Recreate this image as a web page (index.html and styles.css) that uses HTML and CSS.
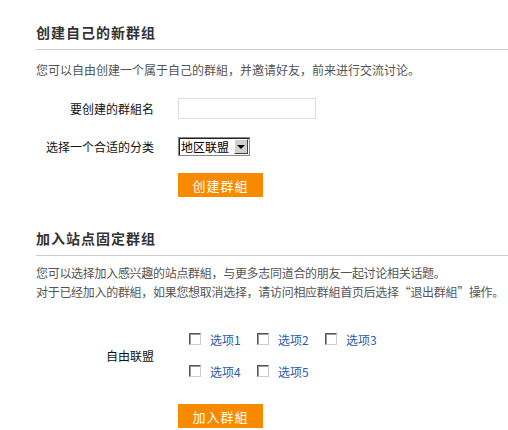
FILE: index.html
```html
<!DOCTYPE html>
<html>
<head>
    <meta charset="UTF-8">
    <meta name="viewport" content="width=device-width, initial-scale=1.0">
    <title>群组</title>
    <link rel="stylesheet" href="styles.css">
</head>
<body>
    <div class="section create">
        <h2>创建自己的新群组</h2>
        <p class="desc">您可以自由创建一个属于自己的群組，并邀请好友，前来进行交流讨论。</p>
        <form class="form">
            <label class="label" for="name">要创建的群組名</label>
            <div class="field"><input id="name" type="text"></div>
            <label class="label" for="cat">选择一个合适的分类</label>
            <div class="field">
                <span class="select-wrap">
                    <select id="cat">
                        <option selected>地区联盟</option>
                        <option>兴趣爱好</option>
                    </select>
                </span>
            </div>
            <div></div>
            <div class="field"><button type="button" class="btn">创建群組</button></div>
        </form>
    </div>
    <div class="section join">
        <h2>加入站点固定群组</h2>
        <p class="desc">您可以选择加入感兴趣的站点群組，与更多志同道合的朋友一起讨论相关话题。<br>对于已经加入的群組，如果您想取消选择，请访问相应群組首页后选择“退出群組”操作。</p>
        <form class="form">
            <div class="label group">自由联盟</div>
            <div class="field options">
                <label class="opt"><input type="checkbox"><a href="#">选项1</a></label>
                <label class="opt"><input type="checkbox"><a href="#">选项2</a></label>
                <label class="opt"><input type="checkbox"><a href="#">选项3</a></label>
                <label class="opt"><input type="checkbox"><a href="#">选项4</a></label>
                <label class="opt"><input type="checkbox"><a href="#">选项5</a></label>
            </div>
            <div></div>
            <div class="field"><button type="button" class="btn">加入群組</button></div>
        </form>
    </div>
</body>
</html>
```

FILE: styles.css
```css
body {
    margin: 0;
    padding: 0 0 0 36px;
    font-family: "Noto Sans CJK SC", "Liberation Sans", sans-serif;
    font-size: 12px;
    color: #333;
    background: #fff;
    overflow: hidden;
}
h2 {
    margin: 0;
    padding-bottom: 7px;
    font-size: 14px;
    line-height: 20px;
    letter-spacing: 1px;
    border-bottom: 1px solid #ccc;
    color: #333;
}
.create h2 {
    padding-top: 22px;
}
.join h2 {
    padding-top: 31px;
}
.desc {
    margin: 0;
    line-height: 19px;
    color: #555;
    white-space: nowrap;
}
.create .desc {
    margin-top: 10px;
}
.join .desc {
    margin-top: 7px;
    letter-spacing: -0.3px;
}
.form {
    display: grid;
    grid-template-columns: 118px 1fr;
    column-gap: 24px;
    align-items: center;
}
.create .form {
    margin-top: 19px;
    row-gap: 18px;
}
.create .form .btn {
    margin-top: -1px;
}
.join .form {
    margin-top: 28px;
    row-gap: 23px;
}
.label {
    text-align: right;
    color: #111;
}
input[type="text"] {
    box-sizing: border-box;
    width: 138px;
    height: 21px;
    margin: 0;
    border: 1px solid #ddd;
    display: block;
}
.select-wrap {
    position: relative;
    display: inline-block;
    vertical-align: top;
}
.select-wrap select {
    appearance: none;
    box-sizing: border-box;
    width: 72px;
    height: 19px;
    margin: 0;
    padding: 0 0 0 2px;
    border: 1px solid #888;
    box-shadow: inset 1px 1px 0 #222;
    background: #fff;
    font: inherit;
    font-size: 12px;
    line-height: 17px;
    color: #000;
    display: block;
}
.select-wrap::before {
    content: "";
    position: absolute;
    right: 2px;
    top: 2px;
    width: 12px;
    height: 13px;
    background: #d4d0c8;
    border: 1px solid;
    border-color: #fff #404040 #404040 #fff;
    pointer-events: none;
}
.select-wrap::after {
    content: "";
    position: absolute;
    right: 5px;
    top: 8px;
    border-left: 4px solid transparent;
    border-right: 4px solid transparent;
    border-top: 4px solid #000;
    pointer-events: none;
}
.btn {
    width: 85px;
    height: 24px;
    margin: 0;
    padding: 0;
    border: 0;
    background: #f88a00;
    color: #fff;
    font: inherit;
    font-size: 13px;
    letter-spacing: 1px;
    display: block;
}
.options {
    display: flex;
    flex-wrap: wrap;
    width: 215px;
    padding-left: 11px;
    row-gap: 12px;
}
.opt {
    display: flex;
    align-items: center;
    width: 68px;
    height: 20px;
}
.opt input {
    appearance: none;
    box-sizing: border-box;
    width: 12px;
    height: 12px;
    margin: 0 9px 0 0;
    border: 1px solid;
    border-color: #555 #ccc #ccc #555;
    box-shadow: inset 1px 1px 0 #999;
    background: #fff;
}
.opt a {
    color: #2a5ca8;
    text-decoration: none;
}
```
